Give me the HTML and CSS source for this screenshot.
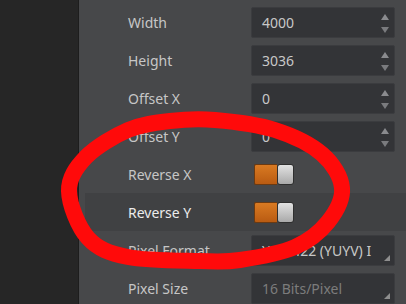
FILE: index.html
```html
<!DOCTYPE html>
<html>
<head>
<meta charset="utf-8">
<link rel="stylesheet" href="styles.css">
</head>
<body>
<div class="app">
  <aside class="sidebar"></aside>
  <main class="panel">
    <div class="row">
      <span class="label">Width</span>
      <div class="box spin"><span class="val">4000</span><span class="arrows"><i class="up"></i><i class="down"></i></span></div>
    </div>
    <div class="row">
      <span class="label">Height</span>
      <div class="box spin"><span class="val">3036</span><span class="arrows"><i class="up"></i><i class="down"></i></span></div>
    </div>
    <div class="row">
      <span class="label">Offset X</span>
      <div class="box spin"><span class="val">0</span><span class="arrows"><i class="up"></i><i class="down"></i></span></div>
    </div>
    <div class="row">
      <span class="label">Offset Y</span>
      <div class="box spin"><span class="val">0</span><span class="arrows"><i class="up"></i><i class="down"></i></span></div>
    </div>
    <div class="row">
      <span class="label">Reverse X</span>
      <div class="toggle"><span class="track"></span><span class="knob"></span></div>
    </div>
    <div class="row active">
      <span class="label">Reverse Y</span>
      <div class="toggle"><span class="track"></span><span class="knob"></span></div>
    </div>
    <div class="row">
      <span class="label">Pixel Format</span>
      <div class="box combo"><span class="val">YUV 422 (YUYV) I</span><i class="corner"></i></div>
    </div>
    <div class="row">
      <span class="label">Pixel Size</span>
      <div class="box combo disabled"><span class="val">16 Bits/Pixel</span><i class="corner"></i></div>
    </div>
  </main>
  <svg class="mark" width="406" height="304" viewBox="0 0 406 304">
    <path d="M 69 191 C 68.67 177.5 76.17 167.17 86 157 C 95.83 146.83 114 136 128 130 C 142 124 155.5 122.67 170 121 C 184.5 119.33 197.5 118.5 215 120 C 232.5 121.5 257.17 124.33 275 130 C 292.83 135.67 310.83 144.33 322 154 C 333.17 163.67 341 176.67 342 188 C 343 199.33 335.83 212.17 328 222 C 320.17 231.83 309.67 240.67 295 247 C 280.33 253.33 255.83 257.67 240 260 C 224.17 262.33 218.67 261.5 200 261 C 181.33 260.5 146.67 260.83 128 257 C 109.33 253.17 97.83 249 88 238 C 78.17 227 69.33 204.5 69 191 Z" fill="none" stroke="#ff0a0a" stroke-width="16"/>
  </svg>
</div>
</body>
</html>
```
FILE: styles.css
```css
* { box-sizing: border-box; }
html, body { margin: 0; padding: 0; }
body {
  width: 406px;
  height: 304px;
  overflow: hidden;
  font-family: "Noto Sans", "Open Sans", sans-serif;
  font-size: 14px;
}
.app {
  position: relative;
  display: flex;
  width: 406px;
  height: 304px;
}
.sidebar {
  width: 79px;
  background: #262626;
  border-right: 1px solid #1d1d1d;
}
.panel {
  flex: 1;
  background: #47484a;
  padding-top: 3px;
  display: flex;
  flex-direction: column;
}
.row {
  flex: none;
  height: 38px;
  display: grid;
  grid-template-columns: 123px 144px;
  align-items: center;
  padding-left: 49px;
}
.row.active {
  background: #404143;
  margin-left: 6px;
  padding-left: 43px;
}
.label {
  color: #c6c6c6;
  white-space: nowrap;
  line-height: 1;
  position: relative;
  top: 1px;
}
.row.active .label { color: #ececec; }
.box {
  position: relative;
  height: 31px;
  background: #333437;
  border: 1px solid #3b3c3f;
  border-radius: 2px;
  display: flex;
  align-items: center;
  padding-left: 10px;
  color: #c8c8c8;
  white-space: nowrap;
  overflow: hidden;
}
.box .val { line-height: 1; position: relative; top: 1px; }
.box.disabled { color: #7c7c7c; }
.arrows {
  position: absolute;
  right: 5px;
  top: 0;
  bottom: 0;
  display: flex;
  flex-direction: column;
  justify-content: space-between;
  padding: 6px 0 4px;
}
.arrows i {
  display: block;
  width: 0;
  height: 0;
  border-left: 4px solid transparent;
  border-right: 4px solid transparent;
}
.arrows .up { border-bottom: 6px solid #8a8b8e; }
.arrows .down { border-top: 6px solid #7a7b7e; }
.corner {
  position: absolute;
  right: 4px;
  bottom: 4px;
  width: 0;
  height: 0;
  border-left: 6px solid transparent;
  border-bottom: 6px solid #8e8e8e;
}
.toggle {
  display: flex;
  width: 40px;
  height: 21px;
  margin-left: 3px;
}
.track {
  width: 23px;
  height: 21px;
  background: linear-gradient(#d97a22, #b95b12);
  border: 1px solid #6b3a12;
  border-right: none;
  border-radius: 2px 0 0 2px;
}
.knob {
  width: 17px;
  height: 21px;
  background: linear-gradient(#e2e2e2, #a9a9a9);
  border: 1px solid #2f2f2f;
  border-radius: 3px;
}
.mark {
  position: absolute;
  left: 0;
  top: 0;
  pointer-events: none;
}
```
